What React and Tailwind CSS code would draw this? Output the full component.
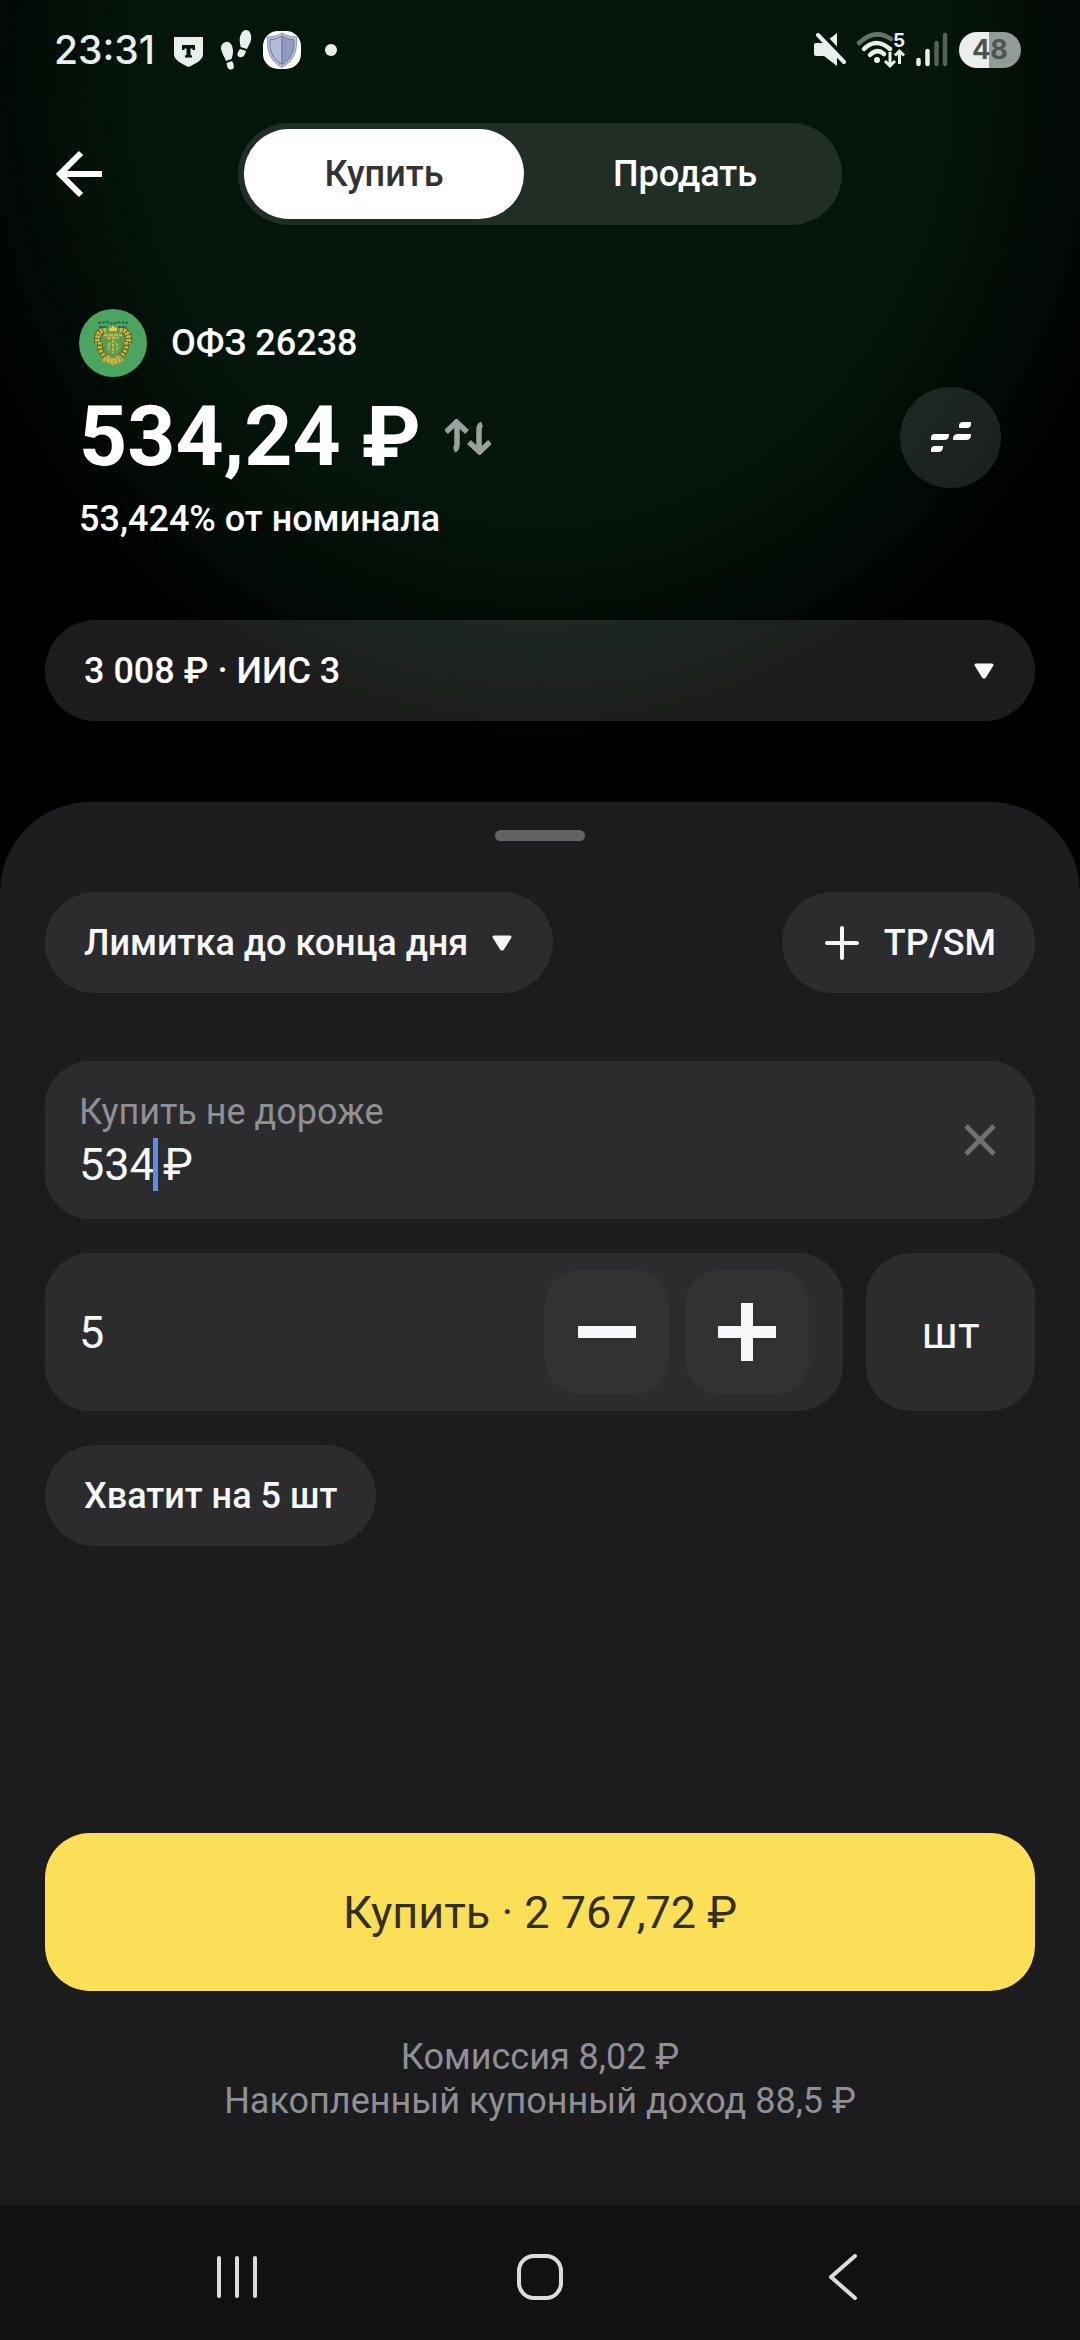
import React, { useState } from "react";

const pill = "h-[101px] rounded-full font-medium text-[36px] leading-[44px]";

function Caret() {
  return (
    <svg width="20" height="16" viewBox="0 0 20 16" className="shrink-0" aria-hidden="true">
      <path d="M2 2H18L10.500 14H9.500Z" fill="currentColor" stroke="currentColor" strokeWidth="3" strokeLinejoin="round" />
    </svg>
  );
}

function StatusBar() {
  return (
    <div className="flex h-[100px] items-center justify-between pl-[54px] pr-[59px] text-[#e9f0ec]">
      <div className="flex items-center">
        <span className="font-[Inter] text-[39px] font-medium leading-[48px]">23:31</span>
        <svg width="30" height="30" viewBox="0 0 30 30" className="ml-[19px] mt-1" aria-hidden="true">
          <path d="M0 0H29V17C29 23 22 26.500 14.500 30C7 26.500 0 23 0 17Z" fill="currentColor" />
          <path d="M8 8H21V13H18.500V11.500H16.500V18L18 18.500V20.500H11V18.500L12.500 18V11.500H10.500V13H8Z" fill="#04160b" />
        </svg>
        <svg width="32" height="40" viewBox="0 0 32 40" className="ml-[17px]" fill="currentColor" aria-hidden="true">
          <path d="M5 12C9 11 12 16 12 21C12 25 11 27 10.500 29L5 31C4 28 0 22 0 18C0 15 2 12.500 5 12Z" />
          <path d="M5.500 33L11 31C13 34 14 39 10.500 39.500C7 40 6 37 5.500 33Z" />
          <path d="M25 0C29 0 31 5 30 10C29 14 27 16 26 19L19.500 17C19.500 14 18 11 19 7C20 3 22 0 25 0Z" />
          <path d="M19 19L25 21C24 25 22 28 18.500 27C15 26 16.500 22 19 19Z" />
        </svg>
        <svg width="38" height="38" viewBox="0 0 38 38" className="ml-[10px]" aria-hidden="true">
          <rect width="38" height="38" rx="15" fill="#fff" />
          <path d="M19 2C23 4.500 28 6 33.500 6C34.500 20 31 30 19 36.500C7 30 3.500 20 4.500 6C10 6 15 4.500 19 2Z" fill="#b9c1da" stroke="#8d96b4" />
          <path d="M19 5C14.500 7.500 11 8.500 7 8.800C6.500 19 9 28 19 33.500Z" fill="#b3bcd9" stroke="#6f7897" />
          <path d="M19 5C23.500 7.500 27 8.500 31 8.800C31.500 19 29 28 19 33.500Z" fill="#929cbe" stroke="#6f7897" />
        </svg>
        <span className="ml-6 size-3 rounded-full bg-current" />
      </div>
      <div className="flex items-center">
        <svg width="34" height="34" viewBox="0 0 34 34" className="mr-[9px]" aria-hidden="true">
          <path d="M2 10H10L23 0V33L10 23H2Q0 23 0 21V12Q0 10 2 10Z" fill="currentColor" />
          <path d="M6 -1L34 29" stroke="#04160b" strokeWidth="5" />
          <path d="M4 2L30 29" stroke="currentColor" strokeWidth="4" strokeLinecap="round" />
        </svg>
        <svg width="48" height="36" viewBox="0 0 48 36" className="mr-[11px] overflow-visible" fill="none" aria-hidden="true">
          <path d="M2 11Q18 -4 34 7" stroke="#66736b" strokeWidth="4.500" strokeLinecap="round" />
          <path d="M7 17Q19 5 33 17" stroke="currentColor" strokeWidth="4.500" strokeLinecap="round" />
          <path d="M13 23Q20 16 27 22" stroke="currentColor" strokeWidth="4.500" strokeLinecap="round" />
          <circle cx="20" cy="28" r="3" fill="currentColor" />
          <path d="M33 20V34M28 29L33 34L38 29M42.500 32V19M38 23.500L42.500 19L47 23.500" stroke="currentColor" strokeWidth="3" />
          <text x="36" y="15" fill="currentColor" fontSize="19" fontWeight="700" fontFamily="Inter, sans-serif">5</text>
        </svg>
        <svg width="32" height="36" viewBox="0 0 32 36" className="mr-[11px]" strokeWidth="4.500" strokeLinecap="round" aria-hidden="true">
          <path d="M2.500 28V32M11.500 19V32" stroke="currentColor" />
          <path d="M20.500 11V32M29 3V32" stroke="#55625a" />
        </svg>
        <span className="flex h-9 w-[62px] items-center justify-center rounded-full bg-linear-to-r from-[#ecefed] from-48% to-[#929c96] to-48% font-[Inter] text-[27px] font-bold leading-9 text-[#4e5351]">
          48
        </span>
      </div>
    </div>
  );
}

function Emblem() {
  return (
    <svg width="68" height="68" viewBox="0 0 68 68" className="shrink-0" aria-hidden="true">
      <circle cx="34" cy="34" r="34" fill="#4ba560" />
      <g fill="none" stroke="#d6b03a">
        <path d="M27 21C20 21 17 27 19 35M41 21C48 21 51 27 49 35" stroke="#4f6a2c" strokeWidth="7" />
        <path d="M27 21C20 21 17 27 19 35M41 21C48 21 51 27 49 35" strokeWidth="5" strokeDasharray="2.500 1" />
        <path d="M21 33C20 40 22 44 27 48M47 33C48 40 46 44 41 48" stroke="#4f6a2c" strokeWidth="6" />
        <path d="M21 33C20 40 22 44 27 48M47 33C48 40 46 44 41 48" strokeWidth="4" strokeDasharray="2.500 1.500" />
        <path d="M26 30H42V41Q42 45 34 47Q26 45 26 41Z" stroke="#7f8a35" strokeWidth="1.500" />
        <path d="M34 31V44M31 34Q28 38 31 42M37 34Q40 38 37 42" strokeWidth="2" strokeDasharray="3 1" />
        <path d="M24 50L34 54L44 50M28 48L34 52L40 48" strokeWidth="4" strokeDasharray="3 1" />
        <path d="M25 26H43M28 29H40" strokeWidth="2.500" strokeDasharray="4 1" />
      </g>
      <path d="M30 22L30.500 18L32.500 19L34 16L35.500 19L37.500 18L38 22Z" fill="#f0c93d" />
      <path d="M19 14L28 13L34 15L40 13L49 14M20 18H29M39 18H48" fill="none" stroke="#1d6f4d" strokeWidth="2" strokeDasharray="3 1" />
    </svg>
  );
}

export default function App() {
  const [price, setPrice] = useState("534");
  const [qty, setQty] = useState(5);

  return (
    <div className="flex min-h-screen flex-col bg-black bg-[radial-gradient(ellipse_58%_690px_at_50%_70px,#04160b_0%,#04160b_64%,#020b05_82%,transparent_100%)] bg-no-repeat font-[Roboto,sans-serif] text-white">
      <StatusBar />

      <header className="mt-[23px] grid grid-cols-[1fr_604px_1fr] items-center">
        <button aria-label="Назад" className="ml-[56px] w-fit">
          <svg width="48" height="48" viewBox="0 0 48 48" fill="none" stroke="currentColor" strokeWidth="6" aria-hidden="true">
            <path d="M46 24H5M25 3L4 24L25 45" />
          </svg>
        </button>
        <div className="flex h-[102px] rounded-full bg-[#202e26] p-[6px] text-[36px] font-medium leading-[44px]">
          <button className="w-[280px] rounded-full bg-white text-[#333]">Купить</button>
          <button className="flex-1 pl-[10px]">Продать</button>
        </div>
      </header>

      <section className="mt-[84px] px-[79px]">
        <div className="flex items-center gap-6 text-[36px] font-medium leading-[44px]">
          <Emblem />
          <h1>ОФЗ 26238</h1>
        </div>
        <div className="mt-[6px] flex h-[108px] items-center gap-6">
          <span className="text-[84px] font-bold leading-[108px]">534,24 ₽</span>
          <button aria-label="Сменить единицы">
            <svg width="46" height="36" viewBox="0 0 46 36" fill="none" stroke="#98a29c" strokeWidth="5.500" aria-hidden="true">
              <path d="M1 13L11.500 3L22 13M12 4V25Q12 30 9 31" />
              <path d="M24 23L34.500 33L45 23M34 32V11Q34 6 37 5" />
            </svg>
          </button>
          <button aria-label="Стакан" className="ml-auto flex size-[101px] items-center justify-center rounded-full bg-white/11">
            <svg width="40" height="30" viewBox="0 0 40 30" fill="currentColor" aria-hidden="true">
              <path d="M32 0H40V2Q40 6 36 6H28V4Q28 0 32 0Z" />
              <path d="M4 12H18V13Q18 18 13 18H0V16Q0 12 4 12ZM27 12H40V13Q40 18 35 18H22V17Q22 12 27 12Z" />
              <path d="M4 24H12V25Q12 30 7 30H0V28Q0 24 4 24Z" />
            </svg>
          </button>
        </div>
        <p className="mt-[6px] text-[36px] font-medium leading-[44px]">53,424% от номинала</p>
      </section>

      <div className="mx-[45px] mt-[79px] grid">
        <button className={`${pill} flex items-center justify-between bg-white/11 pl-[39px] pr-[41px]`}>
          <span>3 008 ₽ · ИИС 3</span>
          <Caret />
        </button>
      </div>

      <main className="mt-[81px] flex grow flex-col rounded-t-[90px] bg-[#1c1c1e] px-[45px] pt-[28px]">
        <div className="mx-auto h-[11px] w-[90px] rounded-full bg-[#636363]" />

        <div className="mt-[51px] flex justify-between text-[#f6f7f8]">
          <button className={`${pill} flex items-center gap-6 bg-[#2c2c2e] pl-[39px] pr-[41px]`}>
            Лимитка до конца дня
            <Caret />
          </button>
          <button className={`${pill} flex items-center gap-6 bg-[#2c2c2e] pl-[42px] pr-[39px]`}>
            <svg width="36" height="36" viewBox="0 0 36 36" stroke="currentColor" strokeWidth="4" strokeLinecap="round" aria-hidden="true">
              <path d="M18 3V33M3 18H33" />
            </svg>
            TP/SM
          </button>
        </div>

        <div className="mt-[68px] flex h-[158px] items-center justify-between rounded-[45px] bg-[#2c2c2e] pl-[34px] pr-[39px]">
          <div className="pt-1">
            <label htmlFor="price" className="block text-[36px] leading-[44px] text-[#8f9095]">
              Купить не дороже
            </label>
            <div className="flex h-[60px] items-center text-[45px] leading-[53px] text-[#f6f7f8]">
              <input
                id="price"
                inputMode="decimal"
                value={price}
                onChange={(e) => setPrice(e.target.value)}
                className="w-[74px] bg-transparent outline-none"
              />
              <span className="h-[53px] w-[5px] bg-[#5b8ee6]" />
              <span className="ml-[5px]">₽</span>
            </div>
          </div>
          <button aria-label="Очистить" onClick={() => setPrice("")}>
            <svg width="32" height="32" viewBox="0 0 32 32" stroke="#707071" strokeWidth="5" aria-hidden="true">
              <path d="M2 2L30 30M30 2L2 30" />
            </svg>
          </button>
        </div>

        <div className="mt-[34px] flex gap-[23px] text-[45px] leading-[53px] text-[#f6f7f8]">
          <div className="flex h-[158px] min-w-0 grow items-center gap-4 rounded-[45px] bg-[#2c2c2e] pl-[34px] pr-[34px]">
            <input
              aria-label="Количество"
              value={qty}
              onChange={(e) => setQty(Number(e.target.value) || 0)}
              className="min-w-0 grow bg-transparent outline-none"
            />
            <button
              aria-label="Меньше"
              onClick={() => setQty(Math.max(0, qty - 1))}
              className="flex size-[124px] shrink-0 items-center justify-center rounded-[34px] bg-[#323232]"
            >
              <span className="h-3 w-[58px] bg-current" />
            </button>
            <button
              aria-label="Больше"
              onClick={() => setQty(qty + 1)}
              className="flex size-[124px] shrink-0 items-center justify-center rounded-[34px] bg-[#323232]"
            >
              <svg width="58" height="58" viewBox="0 0 58 58" stroke="currentColor" strokeWidth="12" aria-hidden="true">
                <path d="M29 0V58M0 29H58" />
              </svg>
            </button>
          </div>
          <button className="h-[158px] w-[169px] shrink-0 rounded-[45px] bg-[#2c2c2e]">шт</button>
        </div>

        <button className={`${pill} mt-[34px] w-fit bg-[#2c2c2e] px-[39px] text-[#f6f7f8]`}>Хватит на 5 шт</button>

        <div className="mt-auto pb-[82px] text-center">
          <button className="h-[158px] w-full rounded-[45px] bg-[#fbdf57] text-[45px] leading-[53px] text-[#33301f]">
            Купить · 2 767,72 ₽
          </button>
          <p className="mt-[44px] text-[36px] leading-[44px] text-[#8f9095]">
            Комиссия 8,02 ₽
            <br />
            Накопленный купонный доход 88,5 ₽
          </p>
        </div>
      </main>

      <nav className="grid h-[135px] grid-cols-3 items-center bg-[#111] pl-[86px] pr-[86px] pt-[9px] text-[#dcdcdc]">
        <button aria-label="Недавние" className="flex justify-center">
          <svg width="44" height="44" viewBox="0 0 44 44" stroke="currentColor" strokeWidth="4" strokeLinecap="round" aria-hidden="true">
            <path d="M4 3V41M22 3V41M40 3V41" />
          </svg>
        </button>
        <button aria-label="Домой" className="flex justify-center">
          <svg width="46" height="46" viewBox="0 0 46 46" fill="none" stroke="currentColor" strokeWidth="4" aria-hidden="true">
            <rect x="2" y="2" width="42" height="42" rx="15" />
          </svg>
        </button>
        <button aria-label="Назад" className="flex justify-center">
          <svg width="30" height="46" viewBox="0 0 30 46" fill="none" stroke="currentColor" strokeWidth="4" strokeLinecap="round" strokeLinejoin="round" aria-hidden="true">
            <path d="M27 2L3 23L27 44" />
          </svg>
        </button>
      </nav>
    </div>
  );
}
